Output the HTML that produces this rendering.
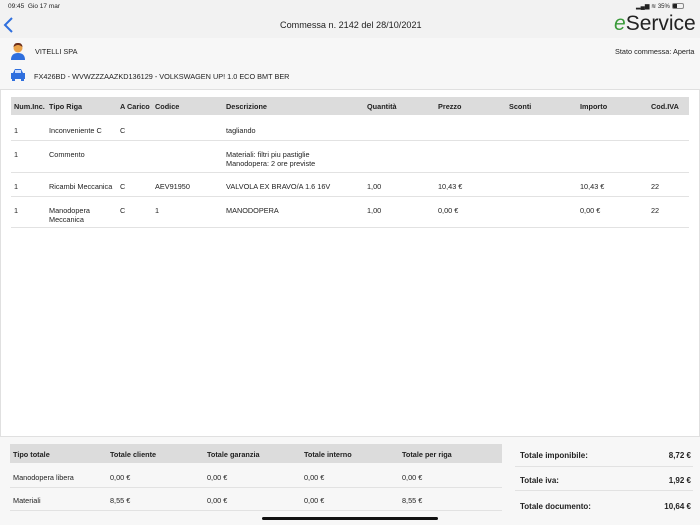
<!DOCTYPE html>
<html><head><style>
*{margin:0;padding:0;box-sizing:border-box}
body{width:700px;height:525px;background:#f7f7f7;font-family:"Liberation Sans",Arial,sans-serif;color:#222;position:relative;overflow:hidden;font-size:7.3px}
.a{position:absolute;white-space:nowrap}
.b{font-weight:bold}
.ln{position:absolute;height:1px;background:#e2e2e2}
</style></head><body>
<div class="a" style="left:0;top:0;width:700px;height:38px;background:#f2f2f2"></div>
<div class="a" style="left:8px;top:3px;font-size:6.5px">09:45 &nbsp;Gio 17 mar</div>
<div class="a" style="left:636px;top:3px;font-size:6px">▂▄▆ ≋ 35% <span style="display:inline-block;width:12px;height:6px;border:1px solid #888;border-radius:2px;vertical-align:middle;background:linear-gradient(90deg,#222 40%,transparent 40%)"></span></div>
<svg class="a" style="left:2px;top:16px" width="12" height="18"><path d="M10 2 L3 9 L10 16" stroke="#2f6fde" stroke-width="2" fill="none"/></svg>
<div class="a" style="left:280px;top:20px;font-size:9.1px">Commessa n. 2142 del 28/10/2021</div>
<div class="a" style="left:614px;top:12px;font-size:21px;color:#222"><span style="color:#3a9a3a;font-style:italic">e</span>Service</div>
<svg class="a" style="left:10px;top:42px" width="16" height="18"><circle cx="8" cy="6" r="4.5" fill="#e9a24a"/><path d="M3.5 5 Q4 0.5 8 1 Q12 0.5 12.5 5 Q10 3 8 3 Q6 3 3.5 5Z" fill="#6b2e1a"/><path d="M1 18 Q1 11 8 11 Q15 11 15 18Z" fill="#2f6fde"/></svg>
<div class="a" style="left:35px;top:47px">VITELLI SPA</div>
<div class="a" style="left:615px;top:47px">Stato commessa: Aperta</div>
<svg class="a" style="left:10px;top:68px" width="16" height="14"><path d="M3 5 L5 1 H11 L13 5 H15 V11 H1 V5Z" fill="#2f6fde"/><rect x="5" y="2" width="6" height="3" fill="#cfe0ff"/><rect x="2" y="11" width="3" height="2" fill="#2f6fde"/><rect x="11" y="11" width="3" height="2" fill="#2f6fde"/></svg>
<div class="a" style="left:34px;top:72px">FX426BD - WVWZZZAAZKD136129 - VOLKSWAGEN UP! 1.0 ECO BMT BER</div>
<div class="a" style="left:0;top:89px;width:700px;height:348px;background:#fff;border:1px solid #e0e0e0"></div>
<div class="a" style="left:11px;top:97px;width:678px;height:18px;background:#dcdcdc"></div>
<div class="a b" style="left:14px;top:102px">Num.Inc.</div>
<div class="a b" style="left:49px;top:102px">Tipo Riga</div>
<div class="a b" style="left:120px;top:102px">A Carico</div>
<div class="a b" style="left:155px;top:102px">Codice</div>
<div class="a b" style="left:226px;top:102px">Descrizione</div>
<div class="a b" style="left:367px;top:102px">Quantità</div>
<div class="a b" style="left:438px;top:102px">Prezzo</div>
<div class="a b" style="left:509px;top:102px">Sconti</div>
<div class="a b" style="left:580px;top:102px">Importo</div>
<div class="a b" style="left:651px;top:102px">Cod.IVA</div>

<div class="a" style="left:14px;top:126px">1</div><div class="a" style="left:49px;top:126px">Inconveniente C</div><div class="a" style="left:120px;top:126px">C</div><div class="a" style="left:226px;top:126px">tagliando</div>
<div class="ln" style="left:11px;top:140px;width:678px"></div>
<div class="a" style="left:14px;top:150px">1</div><div class="a" style="left:49px;top:150px">Commento</div><div class="a" style="left:226px;top:150px;line-height:9px">Materiali: filtri piu pastiglie<br>Manodopera: 2 ore previste</div>
<div class="ln" style="left:11px;top:172px;width:678px"></div>
<div class="a" style="left:14px;top:182px">1</div><div class="a" style="left:49px;top:182px">Ricambi Meccanica</div><div class="a" style="left:120px;top:182px">C</div><div class="a" style="left:155px;top:182px">AEV91950</div><div class="a" style="left:226px;top:182px">VALVOLA EX BRAVO/A 1.6 16V</div><div class="a" style="left:367px;top:182px">1,00</div><div class="a" style="left:438px;top:182px">10,43 €</div><div class="a" style="left:580px;top:182px">10,43 €</div><div class="a" style="left:651px;top:182px">22</div>
<div class="ln" style="left:11px;top:196px;width:678px"></div>
<div class="a" style="left:14px;top:206px">1</div><div class="a" style="left:49px;top:206px;line-height:9px">Manodopera<br>Meccanica</div><div class="a" style="left:120px;top:206px">C</div><div class="a" style="left:155px;top:206px">1</div><div class="a" style="left:226px;top:206px">MANODOPERA</div><div class="a" style="left:367px;top:206px">1,00</div><div class="a" style="left:438px;top:206px">0,00 €</div><div class="a" style="left:580px;top:206px">0,00 €</div><div class="a" style="left:651px;top:206px">22</div>
<div class="ln" style="left:11px;top:227px;width:678px"></div>

<div class="a" style="left:10px;top:444px;width:492px;height:19px;background:#dcdcdc"></div>
<div class="a b" style="left:13px;top:450px">Tipo totale</div>
<div class="a b" style="left:110px;top:450px">Totale cliente</div>
<div class="a b" style="left:207px;top:450px">Totale garanzia</div>
<div class="a b" style="left:304px;top:450px">Totale interno</div>
<div class="a b" style="left:402px;top:450px">Totale per riga</div>
<div class="a" style="left:13px;top:473px">Manodopera libera</div><div class="a" style="left:110px;top:473px">0,00 €</div><div class="a" style="left:207px;top:473px">0,00 €</div><div class="a" style="left:304px;top:473px">0,00 €</div><div class="a" style="left:402px;top:473px">0,00 €</div>
<div class="ln" style="left:10px;top:487px;width:492px"></div>
<div class="a" style="left:13px;top:496px">Materiali</div><div class="a" style="left:110px;top:496px">8,55 €</div><div class="a" style="left:207px;top:496px">0,00 €</div><div class="a" style="left:304px;top:496px">0,00 €</div><div class="a" style="left:402px;top:496px">8,55 €</div>
<div class="ln" style="left:10px;top:510px;width:492px"></div>

<div class="a b" style="left:520px;top:451px;font-size:8px">Totale imponibile:</div><div class="a b" style="right:9px;top:451px;font-size:8px">8,72 €</div>
<div class="ln" style="left:515px;top:466px;width:178px"></div>
<div class="a b" style="left:520px;top:476px;font-size:8px">Totale iva:</div><div class="a b" style="right:9px;top:476px;font-size:8px">1,92 €</div>
<div class="ln" style="left:515px;top:490px;width:178px"></div>
<div class="a b" style="left:520px;top:502px;font-size:8px">Totale documento:</div><div class="a b" style="right:9px;top:502px;font-size:8px">10,64 €</div>
<div class="a" style="left:262px;top:517px;width:176px;height:3px;border-radius:2px;background:#111"></div>
</body></html>
